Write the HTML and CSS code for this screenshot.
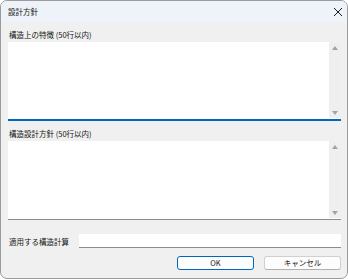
FILE: index.html
```html
<!DOCTYPE html>
<html lang="ja">
<head>
<meta charset="utf-8">
<link rel="stylesheet" href="styles.css">
</head>
<body>
<div class="window">
  <div class="titlebar">
    <span class="title">設計方針</span>
    <svg class="close" width="10" height="10" viewBox="0 0 10 10"><path d="M1 1 L9 9 M9 1 L1 9" stroke="#1a1a1a" stroke-width="1" fill="none"/></svg>
  </div>
  <div class="content">
    <div class="label first">構造上の特徴 (50行以内)</div>
    <div class="area focused">
      <div class="area-text"></div>
      <div class="scroll"><span class="arr up"></span><span class="arr down"></span></div>
    </div>
    <div class="label">構造設計方針 (50行以内)</div>
    <div class="area">
      <div class="area-text"></div>
      <div class="scroll"><span class="arr up"></span><span class="arr down"></span></div>
    </div>
    <div class="row">
      <span class="row-label">適用する構造計算</span>
      <div class="input"></div>
    </div>
    <div class="buttons">
      <button class="btn default">OK</button>
      <button class="btn">キャンセル</button>
    </div>
  </div>
</div>
</body>
</html>
```
FILE: styles.css
```css
html, body {
  margin: 0;
  padding: 0;
  background: #ffffff;
}
body {
  font-family: "Noto Sans CJK JP", "Noto Sans", sans-serif;
  font-size: 7.5px;
  color: #141414;
}
.window {
  width: 348px;
  height: 279px;
  box-sizing: border-box;
  border: 1px solid #9b9b9b;
  border-radius: 7px;
  overflow: hidden;
  background: #f0f0f0;
  display: flex;
  flex-direction: column;
}
.titlebar {
  height: 21px;
  flex: none;
  background: #eef3f9;
  display: flex;
  align-items: center;
  justify-content: space-between;
  padding: 0 4px 0 7px;
}
.title {
  font-size: 7.5px;
  line-height: 11px;
}
.close {
  display: block;
}
.content {
  padding: 0 6px 0 7px;
  display: flex;
  flex-direction: column;
}
.label {
  height: 11px;
  line-height: 11px;
  margin-top: 7px;
  margin-bottom: 2px;
  padding-left: 1px;
  white-space: nowrap;
}
.area {
  height: 79px;
  box-sizing: border-box;
  display: flex;
  background: #ffffff;
  border-bottom: 1px solid #8c8c8c;
}
.area.focused {
  border-bottom: 2px solid #0067c0;
}
.area-text {
  flex: 1;
}
.scroll {
  width: 12px;
  background: #efefef;
  position: relative;
  margin: 0 0 1px 0;
}
.arr {
  position: absolute;
  left: 3px;
  width: 0;
  height: 0;
  border-left: 3px solid transparent;
  border-right: 3px solid transparent;
}
.arr.up {
  top: 4px;
  border-bottom: 4px solid #a3a3a3;
}
.arr.down {
  bottom: 3px;
  border-top: 4px solid #a3a3a3;
}
.row {
  display: flex;
  align-items: center;
  margin-top: 14px;
  height: 14px;
}
.row-label {
  width: 70px;
  flex: none;
  padding-left: 1px;
  white-space: nowrap;
}
.input {
  flex: 1;
  height: 14px;
  box-sizing: border-box;
  background: #ffffff;
  border-bottom: 1px solid #8c8c8c;
}
.buttons {
  display: flex;
  justify-content: flex-end;
  gap: 10px;
  margin-top: 8px;
}
.btn {
  width: 77px;
  height: 14px;
  box-sizing: border-box;
  padding: 0;
  margin: 0;
  font-family: "Noto Sans CJK JP", "Noto Sans", sans-serif;
  font-size: 7.5px;
  line-height: 12px;
  color: #141414;
  background: #fdfdfd;
  border: 1px solid #d0d0d0;
  border-bottom-color: #b0b0b0;
  border-radius: 3px;
}
.btn.default {
  border: 1px solid #0067c0;
}
```
